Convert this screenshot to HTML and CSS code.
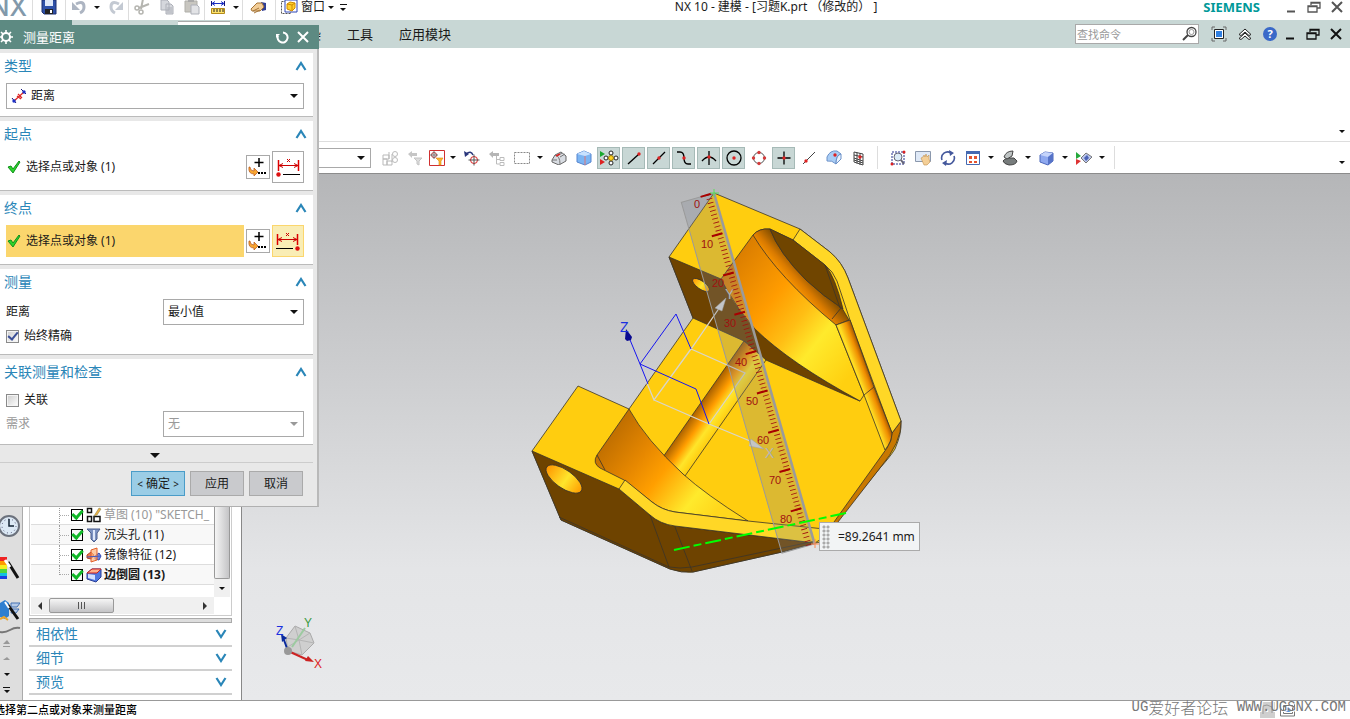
FILE: index.html
```html
<!doctype html>
<html lang="zh-CN">
<head>
    <meta charset="utf-8">
    <title>NX 10 - 建模</title>
    <link rel="stylesheet" href="styles.css">
</head>
<body>
<svg class="defs" aria-hidden="true">
    <symbol id="up" viewBox="0 0 12 10"><path d="M1.500 9L6 2l4.500 7" fill="none" stroke="#2a86b8" stroke-width="2.200"/></symbol>
    <symbol id="down" viewBox="0 0 12 10"><path d="M1.500 1L6 8l4.500-7" fill="none" stroke="#2a86b8" stroke-width="2.200"/></symbol>
    <symbol id="tick" viewBox="0 0 14 14"><path d="M1 7l3-1 2 3 6-8 1 1-7 11z" fill="#2bd52b" stroke="#12901c"/></symbol>
    <symbol id="point" viewBox="0 0 20 20"><path d="M11 1v9M6.500 5.500h9" stroke="#000" stroke-width="1.500"/><path d="M2 10q0 4 4 4v-3l4 4-4 4v-2q-6 0-5-7z" fill="#f7a531" stroke="#b4541a" stroke-width=".7"/><path d="M10 16h2m1 0h2m1 0h2" stroke="#000" stroke-width="2"/></symbol>
    <symbol id="restore" viewBox="0 0 14 12"><path d="M4 4V1.500h9V7h-3M1 5h9v6H1zM4 2h9M1 5.500h9" fill="none" stroke="currentColor" stroke-width="1.300"/></symbol>
    <symbol id="close" viewBox="0 0 12 12"><path d="M1 1l10 10m0-10L1 11" stroke="currentColor" stroke-width="2"/></symbol>
    <symbol id="min" viewBox="0 0 12 12"><path d="M2 10.500h8" stroke="currentColor" stroke-width="2"/></symbol>
</svg>

<header class="titlebar">
    <div class="logo">NX</div>
    <i class="sep"></i>
    <button class="tool wide" aria-label="保存"><svg width="16" height="16"><path d="M1 1h14v14H3l-2-2z" fill="#2e50a8" stroke="#1c2f70"/><path d="M4 1h8v6H4z" fill="#dfe8f8"/><path d="M4 10h8v5H4z" fill="#222"/><path d="M9 11h2v3H9z" fill="#fff"/></svg></button>
    <i class="sep"></i>
    <button class="tool" aria-label="撤消"><svg width="16" height="16"><path d="M5 5q8-4 8 3 0 4-4 6" fill="none" stroke="#adb5c2" stroke-width="3"/><path d="M1 3v8h8z" fill="#adb5c2"/></svg></button>
    <button class="caret" aria-label="撤消列表"></button>
    <button class="tool" aria-label="重做"><svg width="16" height="16"><path d="M11 5Q3 1 3 8q0 4 4 6" fill="none" stroke="#c3c9d2" stroke-width="3"/><path d="M15 3v8H7z" fill="#c3c9d2"/></svg></button>
    <i class="sep"></i>
    <button class="tool" aria-label="剪切"><svg width="16" height="16"><path d="M9 0L7 10M15 5L5 9" stroke="#b5b5b0" stroke-width="2"/><circle cx="3" cy="9" r="2" fill="none" stroke="#b5b5b0" stroke-width="1.500"/><circle cx="7" cy="13" r="2" fill="none" stroke="#b5b5b0" stroke-width="1.500"/></svg></button>
    <button class="tool" aria-label="复制"><svg width="16" height="16"><path d="M2 1h6l2 2v8H2zM7 5h5l2 2v8H7z" fill="#d5d7dc" stroke="#adb0b8"/><path d="M8 9h5m-5 2h5m-5 2h5" stroke="#adb0b8"/></svg></button>
    <button class="tool" aria-label="粘贴"><svg width="16" height="16"><path d="M1 2h12v11H1z" fill="#c8c6c0" stroke="#b0afa9"/><path d="M4 0h6v3H4z" fill="#aaa"/><path d="M7 6h6l2 2v7H7z" fill="#e2e3e6" stroke="#adb0b8"/></svg></button>
    <i class="sep"></i>
    <button class="tool" aria-label="测量"><svg width="16" height="16"><path d="M1.500 2v5m13-5v5" stroke="#15157d"/><path d="M2 4.500h12M5 2.500l-3 2 3 2m6-4l3 2-3 2" stroke="#1b2fc4" fill="none"/><path d="M1.500 9.500h13v5h-13z" fill="#ffe36b" stroke="#b38b1a"/><path d="M4 10v3m3-3v3m3-3v3m3-3v3" stroke="#222"/></svg></button>
    <button class="caret" aria-label="测量列表"></button>
    <i class="sep"></i>
    <button class="tool wide" aria-label="刷"><svg width="18" height="16"><path d="M11 3l5 1v7l-4 1z" fill="#303e94"/><path d="M1 10l6-6 5 0 2 4-4 4H2z" fill="#f2cd97" stroke="#a57437"/><path d="M3 12l6-3m-5 5l6-3" stroke="#a57437"/></svg></button>
    <i class="sep"></i>
    <button class="tool" aria-label="窗口"><svg width="18" height="16"><path d="M1.500 2.500h9v12h-9z" fill="none" stroke="#555" stroke-dasharray="2 1"/><path d="M5 1h12v12H5z" fill="#fff" stroke="#2f46b5"/><path d="M7 5l3-2 5 1v5l-3 3-5-2z" fill="#ffd02b" stroke="#d08a00"/><path d="M7 5l5 1v5m0-5l3-2" stroke="#d08a00" fill="none"/></svg></button>
    <span class="window-text">窗口</span>
    <button class="caret" aria-label="窗口列表"></button>
    <button class="caret more" aria-label="更多"></button>
    <h1>NX 10 - 建模 - [习题K.prt （修改的）&nbsp;]</h1>
    <strong class="siemens">SIEMENS</strong>
    <div class="win-buttons">
        <button aria-label="最小化"><svg width="12" height="12"><use href="#min"/></svg></button>
        <button aria-label="还原"><svg width="14" height="12"><use href="#restore"/></svg></button>
        <button aria-label="关闭"><svg width="12" height="12"><use href="#close"/></svg></button>
    </div>
</header>

<nav class="menubar">
    <i class="tab-file"></i>
    <i class="tab-current"></i>
    <a href="#" class="cut">渲染</a>
    <a href="#">工具</a>
    <a href="#">应用模块</a>
    <label class="search">
        <input type="text" placeholder="查找命令" aria-label="查找命令">
        <svg width="16" height="16"><circle cx="9.500" cy="6" r="4.500" fill="#fff" stroke="#444" stroke-width="1.300"/><circle cx="9.500" cy="6" r="2.500" fill="none" stroke="#999"/><path d="M6 9l-5 5" stroke="#444" stroke-width="2"/></svg>
    </label>
    <div class="menu-icons">
        <button aria-label="全屏"><svg width="16" height="16"><path d="M1 4V1h3m8 0h3v3m0 8v3h-3m-8 0H1v-3" fill="none" stroke="#666"/><path d="M3.500 3.500h9v9h-9z" fill="#fff" stroke="#222"/><path d="M5 5h6v6H5z" fill="#2f7fe0"/></svg></button>
        <button aria-label="折叠功能区"><svg width="14" height="12"><path d="M1 6.500L7 1l6 5.500-2 1-4-3.500-4 3.500zM1 10.500L7 5l6 5.500-2 1L7 8l-4 3.500z" fill="#fff" stroke="#222"/></svg></button>
        <button aria-label="帮助" class="help">?</button>
    </div>
    <div class="win-buttons dark">
        <button aria-label="最小化文档"><svg width="12" height="12"><use href="#min"/></svg></button>
        <button aria-label="还原文档"><svg width="14" height="12"><use href="#restore"/></svg></button>
        <button aria-label="关闭文档"><svg width="12" height="12"><use href="#close"/></svg></button>
    </div>
</nav>

<div class="ribbon"><button class="caret" aria-label="功能区选项"></button></div>

<div class="toolbar">
    <label class="combo filter"><select aria-label="选择过滤器"><option></option></select></label>
    <button class="tool" aria-label="装配过滤"><svg width="18" height="16"><path d="M2 5h6v4H2zM2 9h4v6H2zM6 11h5v4H6zM8 2v7M11 4v8" fill="none" stroke="#b9b9b9"/><circle cx="14" cy="4" r="2.500" fill="none" stroke="#bbb"/><circle cx="14" cy="10" r="2.500" fill="none" stroke="#bbb"/></svg></button>
    <button class="tool" aria-label="重置过滤"><svg width="16" height="16"><path d="M1 4l4-3v2h5v3H5v2z" fill="#c6c6c6"/><path d="M7 8h8l-3 3v4l-2-1v-3z" fill="#ddd" stroke="#c4c4c4"/></svg></button>
    <button class="tool narrow" aria-label="过滤"><svg width="16" height="16"><path d="M.500.500h15v15H.500z" fill="#fff" stroke="#d03030"/><circle cx="5" cy="5" r="2.500" fill="none" stroke="#a33"/><path d="M5 1v8M1 5h8" stroke="#777"/><path d="M7 8h7l-2 3v4h-2v-4z" fill="#ffb52b" stroke="#d98a12" stroke-width=".6"/></svg></button>
    <button class="caret" aria-label="过滤列表"></button>
    <button class="tool" aria-label="取消选择"><svg width="16" height="16"><path d="M2 4q5-4 7 1" fill="none" stroke="#29367b" stroke-width="1.500"/><path d="M0 1l1 6 4-3z" fill="#29367b"/><circle cx="10" cy="10" r="3.500" fill="none" stroke="#d22"/><path d="M10 4.500v11M4.500 10h11" stroke="#555"/></svg></button>
    <button class="tool" aria-label="查找组件"><svg width="18" height="16"><path d="M1 4l4-3v2h6v3H5v2z" fill="#b5b5b5"/><path d="M8.500 6v8h3M9 9.500h3m0-2h4v3h-4zm0 5h4v3h-4z" fill="none" stroke="#bcbcbc"/></svg></button>
    <button class="tool" aria-label="矩形选择"><svg width="16" height="14"><path d="M.500 1.500h15v11H.500z" fill="none" stroke="#888" stroke-dasharray="2 1"/></svg></button>
    <button class="caret" aria-label="选择列表"></button>
    <button class="tool" aria-label="高亮"><svg width="16" height="14"><path d="M1 9l3-5 6-3 5 4v5l-7 4-7-3z" fill="#d8dce2" stroke="#666"/><path d="M4 4q5 1 5 9m0-7l5-3M1 9l5 0M6 5l5-3" fill="none" stroke="#777"/><path d="M5 5l4-2" stroke="#d22" stroke-width="1.500"/></svg></button>
    <button class="tool" aria-label="实体"><svg width="16" height="16"><path d="M1 4l7-3 7 3v8l-6 3-8-3z" fill="#7cb5f3" stroke="#5685cf"/><path d="M1 4l8 2 6-2-7-3z" fill="#c8e2ff"/><path d="M9 6v9" stroke="#d77"/></svg></button>
    <button class="tool on" aria-label="启用捕捉点"><svg width="20" height="16"><path d="M1 1l5 3-5 3z" fill="#18a82e"/><path d="M1 9l5 3-5 3z" fill="#d22"/><g fill="#fff" stroke="#222"><circle cx="12" cy="3" r="2"/><circle cx="12" cy="13" r="2"/><circle cx="7" cy="8" r="2"/><circle cx="17" cy="8" r="2"/></g><circle cx="12" cy="8" r="2.500" fill="#ffd320" stroke="#96760a"/></svg></button>
    <button class="tool on" aria-label="端点"><svg width="16" height="16"><path d="M2 14L13 4" stroke="#000" stroke-width="1.300"/><circle cx="13" cy="4" r="1.700" fill="#d22"/></svg></button>
    <button class="tool on" aria-label="中点"><svg width="16" height="16"><path d="M2 14L14 2" stroke="#000" stroke-width="1.300"/><circle cx="8" cy="8" r="1.700" fill="#d22"/></svg></button>
    <button class="tool on" aria-label="控制点"><svg width="16" height="16"><path d="M1 2h3q4 0 4 6t4 6h3" fill="none" stroke="#000" stroke-width="1.300"/><circle cx="8" cy="8" r="1.700" fill="#d22"/></svg></button>
    <button class="tool on" aria-label="交点"><svg width="16" height="16"><path d="M1 11q7-8 14 0M8 1v14" fill="none" stroke="#000" stroke-width="1.300"/><circle cx="8" cy="7" r="1.700" fill="#d22"/></svg></button>
    <button class="tool on" aria-label="圆心"><svg width="16" height="16"><circle cx="8" cy="8" r="7" fill="none" stroke="#000" stroke-width="1.300"/><circle cx="8" cy="8" r="1.700" fill="#d22"/></svg></button>
    <button class="tool" aria-label="象限点"><svg width="16" height="16"><circle cx="8" cy="8" r="5.500" fill="none" stroke="#555"/><g fill="#d43b3b"><circle cx="8" cy="2.500" r="1.700"/><circle cx="8" cy="13.500" r="1.700"/><circle cx="2.500" cy="8" r="1.700"/><circle cx="13.500" cy="8" r="1.700"/></g></svg></button>
    <button class="tool on" aria-label="现有点"><svg width="16" height="16"><path d="M8 1.500v13M1.500 8h13" stroke="#000" stroke-width="1.300"/><circle cx="8" cy="8" r="1.700" fill="#d22"/></svg></button>
    <button class="tool" aria-label="曲线上的点"><svg width="16" height="16"><path d="M2 14L14 2" stroke="#444"/><circle cx="5" cy="11" r="1.700" fill="#d22"/></svg></button>
    <button class="tool" aria-label="面上的点"><svg width="16" height="16"><path d="M1 7q3-7 10-6l4 3q-5 1-5 10-4-4-9-3z" fill="#a9cdf5" stroke="#6b91c9"/><path d="M10 14q0-9 5-10v5z" fill="#e8f2fd" stroke="#6b91c9"/><circle cx="9" cy="5" r="1.700" fill="#d22"/></svg></button>
    <button class="tool" aria-label="有界栅格上的点"><svg width="16" height="16"><path d="M3 2l9 2v11l-9-3zM6 2.500v11M9 3v12M3 5l9 2M3 8l9 3M3 10l9 3" fill="none" stroke="#444"/><circle cx="9" cy="7" r="1.700" fill="#d22"/></svg></button>
    <i class="sep"></i>
    <button class="tool" aria-label="适合窗口"><svg width="16" height="16"><path d="M2 2h12v12H2z" fill="none" stroke="#24318f" stroke-dasharray="2 1"/><circle cx="8" cy="7" r="4" fill="#dcebf7" stroke="#667"/><path d="M11 10l3 4" stroke="#667" stroke-width="2"/><circle cx="14" cy="2" r="1.500" fill="#d22"/><circle cx="2" cy="14" r="1.500" fill="#d22"/></svg></button>
    <button class="tool" aria-label="平移"><svg width="16" height="16"><path d="M.500 1.500h15v10H.500z" fill="#dfe9f7" stroke="#8b98ad"/><path d="M6 8l2-1 1-2 1 2 1-3 1 3 2-2v4l1 3-3 3H9z" fill="#f4cf97" stroke="#c2914e" stroke-width=".6"/></svg></button>
    <button class="tool" aria-label="旋转"><svg width="16" height="16"><path d="M2 10A6 6 0 0 1 11 3M14 6a6 6 0 0 1-9 7" fill="none" stroke="#44589c" stroke-width="1.600"/><path d="M9 0l5 3-4 3zM7 10l-5 3 4 3z" fill="#44589c"/></svg></button>
    <button class="tool" aria-label="布局"><svg width="16" height="16"><path d="M1.500 1.500h13v13h-13z" fill="#fff" stroke="#4569b1"/><path d="M1 1h14v3H1z" fill="#4569b1"/><path d="M4 6h3v3H4zm5 0h3v3H9zm-5 5h3v2H4zm5 0h3v2H9z" fill="#e4532f"/></svg></button>
    <button class="caret" aria-label="布局列表"></button>
    <button class="tool" aria-label="渲染样式"><svg width="16" height="16"><path d="M1 11q1-2 5-3l6 0 3 3q-1 4-8 4-5-1-6-4z" fill="#777c7c" stroke="#444"/><path d="M2 7q2-6 9-6l-1 5-5 3z" fill="#bfc4c4" stroke="#444"/></svg></button>
    <button class="caret" aria-label="渲染列表"></button>
    <button class="tool" aria-label="视图方位"><svg width="16" height="16"><path d="M1 5l5-3 8 1v8l-5 4-8-3z" fill="#8ea8ef" stroke="#4d68bb"/><path d="M1 5l5-3 8 1-5 4z" fill="#c5d4fb"/><path d="M9 7v8l5-4V3z" fill="#5673c8"/></svg></button>
    <button class="caret" aria-label="方位列表"></button>
    <button class="tool" aria-label="剪切截面"><svg width="18" height="16"><path d="M1 2l5 4-5 3z" fill="#25a83c"/><path d="M1 9l5 2-5 4z" fill="#d33"/><path d="M6 8l5-5 6 4-6 6z" fill="#bac6ec" stroke="#777"/><path d="M9 8l3-3 2 3-3 3z" fill="#4b62b5"/></svg></button>
    <button class="caret" aria-label="截面列表"></button>
    <i class="sep"></i>
    <button class="caret last" aria-label="工具条选项"></button>
</div>

<main class="workspace">
    <aside class="resource">
        <svg width="22" height="24"><circle cx="9" cy="11" r="10" fill="#dce9f5" stroke="#6b717c" stroke-width="2"/><circle cx="9" cy="11" r="7" fill="none" stroke="#557" stroke-dasharray="1 3"/><path d="M9 4v7h5" fill="none" stroke="#123" stroke-width="1.500"/></svg>
        <svg width="22" height="24"><path d="M0 0h7v4H0z" fill="#e22"/><path d="M0 4h7v4H0z" fill="#ff9a00"/><path d="M0 8h7v4H0z" fill="#f5ee20"/><path d="M0 12h7v4H0z" fill="#4fd63b"/><path d="M0 16h7v3H0z" fill="#12bfe0"/><path d="M0 19h7v3H0z" fill="#1b3fe0"/><path d="M8 5l10 16" stroke="#111" stroke-width="3"/><path d="M5 3l5 7" stroke="#fff" stroke-width="3"/></svg>
        <svg width="22" height="24"><path d="M0 4l5-3 4 3v13l-4 3-5-2z" fill="#2f7fd0"/><path d="M11 4h9l-3 4h-6zM12 10h7l-3 4h-5z" fill="#b6cbe8" stroke="#4673b3"/><path d="M8 6l10 14" stroke="#111" stroke-width="3"/><path d="M0 20l4-2 4 3" stroke="#eea52a" stroke-width="2" fill="none"/><path d="M5 3l4 6" stroke="#fff" stroke-width="2"/></svg>
        <svg width="22" height="13"><path d="M0 9q5 1 10-2t10-2" fill="none" stroke="#777" stroke-width="2"/></svg>
        <svg width="22" height="15"><path d="M3 8l4-4 3 4zM3 10h7v1H3z" fill="#999"/></svg>
        <svg width="22" height="15"><path d="M3 9l4-3 3 3z" fill="#999"/></svg>
        <svg width="22" height="15"><path d="M4 7h6L7 10z" fill="#111"/></svg>
        <svg width="22" height="15"><path d="M3 6h7v1H3zM4 9h6l-3 3z" fill="#111"/></svg>
    </aside>
    <aside class="navigator">
        <div class="tree">
            <div class="tree-body">
                <ul>
                    <li class="muted"><label><input type="checkbox" checked><svg width="16" height="16"><path d="M1.500 1.500h4v4h-4zM1.500 9.500h4v5h-4zM8 9.500h6v5H8z" fill="none" stroke="#111" stroke-width="1.500"/><path d="M8 9l5-8 2 1-4 6z" fill="#f0b040" stroke="#885" stroke-width=".6"/></svg>草图 (10) "SKETCH_</label></li>
                    <li><label><input type="checkbox" checked><svg width="16" height="16"><path d="M1 2h13l-3 4v6l-3 3-3-3V6z" fill="#7d93c2" stroke="#4a5d8c"/><path d="M7 3h2v10H7z" fill="#dfe8fa"/></svg>沉头孔 (11)</label></li>
                    <li><label><input type="checkbox" checked><svg width="16" height="16"><path d="M1 8l4-3 3 3-3 4-4-1z" fill="#f07b52" stroke="#b54122"/><path d="M9 9l4-3 2 3-2 4-4-1z" fill="#6f8be5" stroke="#3449ae"/><path d="M5 3l6-2v12l-6 2z" fill="#ffb27a" fill-opacity=".7" stroke="#e05f2b"/><path d="M1 10l14-1" stroke="#4155c0"/></svg>镜像特征 (12)</label></li>
                    <li class="bold"><label><input type="checkbox" checked><svg width="16" height="16"><path d="M1 6l5-4 9 0v8l-5 5-9-3z" fill="#4f77df" stroke="#293e96"/><path d="M1 6l5-4 9 0-4 4z" fill="#ffb08a" stroke="#c22"/><path d="M2 7l7 1v5l-7-2z" fill="#d3e1ff"/></svg>边倒圆 (13)</label></li>
                </ul>
                <div class="vscroll"><i class="thumb"></i><button class="caret" aria-label="向下滚动"></button></div>
            </div>
            <div class="hscroll">
                <button aria-label="向左滚动"><svg width="8" height="8"><path d="M6 0v8L2 4z" fill="#333"/></svg></button>
                <i class="thumb"><b></b><b></b><b></b></i>
                <button aria-label="向右滚动"><svg width="8" height="8"><path d="M2 0v8l4-4z" fill="#333"/></svg></button>
            </div>
        </div>
        <div class="splitter"></div>
        <a href="#" class="fold">相依性<svg width="12" height="10"><use href="#down"/></svg></a>
        <a href="#" class="fold">细节<svg width="12" height="10"><use href="#down"/></svg></a>
        <a href="#" class="fold">预览<svg width="12" height="10"><use href="#down"/></svg></a>
    </aside>
    <section class="viewport">
        <svg class="scene" role="img" aria-label="零件模型">
            <defs>
                <linearGradient id="wall" gradientUnits="userSpaceOnUse" x1="728" y1="262" x2="858" y2="365">
                    <stop offset="0" stop-color="#d97c00"/><stop offset=".35" stop-color="#ff9c00"/><stop offset=".55" stop-color="#ffbe14"/><stop offset=".72" stop-color="#ffea2c"/><stop offset="1" stop-color="#ffd010"/>
                </linearGradient>
                <linearGradient id="fillet" gradientUnits="userSpaceOnUse" x1="782" y1="277" x2="801" y2="260">
                    <stop offset="0" stop-color="#ff9900"/><stop offset=".4" stop-color="#d97a00"/><stop offset="1" stop-color="#704500"/>
                </linearGradient>
                <linearGradient id="side" gradientUnits="userSpaceOnUse" x1="847" y1="364" x2="863" y2="358">
                    <stop offset="0" stop-color="#ffc40c"/><stop offset=".35" stop-color="#ffdf24"/><stop offset=".8" stop-color="#ef8d00"/><stop offset="1" stop-color="#b56300"/>
                </linearGradient>
                <linearGradient id="pocket" gradientUnits="userSpaceOnUse" x1="606" y1="438" x2="710" y2="520">
                    <stop offset="0" stop-color="#bf6e00"/><stop offset=".3" stop-color="#e78800"/><stop offset=".5" stop-color="#ff9f00"/><stop offset=".8" stop-color="#ffea2c"/><stop offset="1" stop-color="#ffd71c"/>
                </linearGradient>
                <linearGradient id="groove" gradientUnits="userSpaceOnUse" x1="703" y1="399" x2="727" y2="416">
                    <stop offset="0" stop-color="#a65e00"/><stop offset=".4" stop-color="#ff9c00"/><stop offset=".7" stop-color="#ffe52a"/><stop offset="1" stop-color="#ffce10"/>
                </linearGradient>
                <linearGradient id="hole"><stop offset="0" stop-color="#ff9500"/><stop offset=".55" stop-color="#ffe52c"/><stop offset="1" stop-color="#ff9d00"/></linearGradient>
            </defs>
            <g transform="translate(-242 -174)">
                <!-- 实体 -->
                <g stroke="#3a332a" stroke-width=".8" stroke-linejoin="round">
                    <path fill="#ffcd0f" d="M714 193L800 229L830 252Q842 262 848 278L901 421Q902 433 895 449Q890 457 880 468L820 542L782 552L693 572Q681 573 670 569L561 520L532 451L578 386L629 409L693 318L669 257Z"/>
                    <path fill="#c87800" d="M901 421L892 433Q892 441 887 448L834 522L820 542L838 522L880 468Q902 442 901 421Z"/>
                    <path fill="#ffd726" d="M793 240L800 229L830 252Q842 262 848 278L901 421L892 433L887 420L850 320L837 281Q833 271 825 265Z"/>
                    <path fill="#6e4300" d="M669 257L721 279L727 290Q738 310 755 329Q790 363 860 401Q852 398 766 360L744 341L693 318Z"/>
                    <path fill="url(#wall)" d="M721 279L753 235Q759 228 770 229L793 240L840 312L836 325L864 395L860 401Q790 363 755 329Q738 310 727 290Z"/>
                    <path fill="url(#fillet)" d="M753 235Q759 228 770 229Q779 253 806 280Q823 296 842 308L849 320L836 325Q778 277 753 235Z"/>
                    <path fill="#704500" d="M770 229L793 240L825 265Q835 276 843 309Q823 296 806 280Q779 253 770 229Z"/>
                    <path fill="none" d="M825 265L840 308M832 319L841 308"/>
                    <path fill="url(#side)" d="M836 325L850 320L874 387L892 433Q892 441 885 450L864 395Z"/>
                    <path fill="none" d="M864 395L874 387"/>
                    <path fill="url(#groove)" d="M744 341L663 457L685 476L766 360Z"/>
                    <path fill="url(#pocket)" d="M629 409L597 455Q592 463 600 468L624 480L652 502Q662 510 675 512L748 521Q705 494 683 474Q646 440 629 409Z"/>
                    <path fill="none" d="M597 455L605 470"/>
                    <path fill="#6e4300" d="M532 451L619 489L650 515Q660 524 675 526L815 543L782 552L693 572Q681 573 670 569L561 520Z"/>
                    <path fill="#ffd726" d="M619 489L625 480L652 502Q662 510 675 512L748 521L834 530L815 543L675 526Q660 524 650 515Z"/>
                    <path fill="none" d="M650 515L669 567M675 527L692 571M559 517L669 567Q680 569 692 567L815 541"/>
                    <ellipse cx="564" cy="479" rx="21" ry="9" transform="rotate(35 564 479)" fill="url(#hole)"/>
                    <ellipse cx="701" cy="285" rx="10" ry="4" transform="rotate(35 701 285)" fill="url(#hole)"/>
                </g>
                <!-- 坐标系 -->
                <g fill="none" stroke="#d8d5cc" stroke-width="1.300">
                    <path d="M644 376L654 400L691 349L720 307M654 400L709 424L755 443M691 349L745 373L709 424"/>
                </g>
                <path d="M726 298L715 308L722 311ZM764 449L751 439L749 446Z" fill="#ddd" stroke="#aaa" stroke-width=".5"/>
                <path d="M628 335L640 364L676 314L691 349M640 364L696 389L709 424M640 364L648 384" fill="none" stroke="#1616f0"/>
                <path d="M626 329L632 337L631 340L627 341L625 339Z" fill="#0a0a90"/>
                <text x="620" y="332" class="axis blue">Z</text>
                <text x="725" y="299" class="axis grey">Y</text>
                <text x="765" y="458" class="axis grey">X</text>
                <!-- 标尺 -->
                <g transform="translate(714 193) rotate(-16)">
                    <path d="M-34 0H0V365H-34Z" fill="#7d8590" fill-opacity=".27" stroke="#9a9a9a"/>
                    <path d="M0 0V365" stroke="#9b9b9b" stroke-width="2.500"/>
                    <path d="M-6 0V365" pathLength="89.260" stroke="#a01010" stroke-width="6" stroke-dasharray=".2 .8"/>
                    <path d="M-8.500-1V365" pathLength="89.500" stroke="#a80000" stroke-width="11" stroke-dasharray=".5 9.500"/>
                </g>
                <g class="scale">
                    <text x="697" y="208">0</text><text x="707" y="248">10</text><text x="718" y="287">20</text>
                    <text x="730" y="327">30</text><text x="741" y="366">40</text><text x="752" y="405">50</text>
                    <text x="763" y="444">60</text><text x="775" y="484">70</text><text x="786" y="523">80</text>
                </g>
                <path d="M674 550L846 513" stroke="#0f0" stroke-width="2" stroke-dasharray="16 4 8 4"/>
                <path d="M710 193h9M714 189v8" stroke="#5ae05a"/>
                <path d="M811 544h9M815 539v9" stroke="#ff8a50"/>
                <!-- 视图三重轴 -->
                <path d="M295 626L310 633L314 643L302 655L288 651L286 638Z" fill="#cfcfcf" stroke="#aaa"/>
                <path d="M295 626L299 640L314 643M299 640L286 648M299 640L302 655M286 638L299 640L310 633" fill="none" stroke="#b5b5b5"/>
                <path d="M292 647L305 628" stroke="#9ccaa0" stroke-width="2"/>
                <path d="M288 651L284 640" stroke="#0a2a9c" stroke-width="2"/><path d="M281 634L287 638L282 642Z" fill="#0a2a9c"/>
                <path d="M288 651L308 660" stroke="#c22" stroke-width="2"/><path d="M314 662L305 661L308 656Z" fill="#c22"/>
                <circle cx="288" cy="651" r="4" fill="#999"/>
                <text x="276" y="635" class="triad blue">Z</text>
                <text x="304" y="627" class="triad green">Y</text>
                <text x="314" y="668" class="triad red">X</text>
            </g>
        </svg>
        <output class="measure"><i></i>=89.2641 mm</output>
    </section>
</main>

<footer class="status">
    <span>选择第二点或对象来测量距离</span>
    <svg width="36" height="16"><path d="M0 0h15v16H0z" fill="#cfcfcf"/><path d="M3 12V4l4-1 5 2v6" fill="none" stroke="#999"/><path d="M20.500 1v13h14V1M23.500 3.500h9v8h-9z" fill="#fff" stroke="#777"/><path d="M25 8l3-3 3 3v2h-6z" fill="#5c97dd"/></svg>
</footer>
<div class="watermark"><b>UG</b>爱好者论坛<b> WWW.UGSNX.COM</b></div>

<form class="dialog">
    <header>
        <svg width="14" height="14"><circle cx="6" cy="7" r="4" fill="none" stroke="#fff" stroke-width="2"/><path d="M6 0v3m0 8v3M-1 7h3m8 0h3M1 2l2 2m6 6l2 2M11 2l-2 2M3 10l-2 2" stroke="#fff" stroke-width="1.600"/></svg>
        <h2>测量距离</h2>
        <button type="reset" aria-label="重置"><svg width="14" height="14"><path d="M8 2.500a5 5 0 1 1-5 3" fill="none" stroke="#fff" stroke-width="2"/><path d="M1 8V4h4z" fill="#fff"/></svg></button>
        <button type="button" aria-label="关闭对话框"><svg width="12" height="12"><use href="#close"/></svg></button>
    </header>
    <section class="group">
        <h3>类型<svg width="12" height="10"><use href="#up"/></svg></h3>
        <div class="row">
            <label class="combo">
                <svg width="16" height="16"><path d="M1 10l4 5M10 1l5 5" stroke="#15157d"/><path d="M3 13L13 4M6 8l4 3M7 6l4 4" stroke="#d22" stroke-width="1.200"/><circle cx="3" cy="13" r="1.700" fill="#1b2fc4"/><circle cx="13" cy="4" r="1.700" fill="#1b2fc4"/></svg>
                <select aria-label="类型"><option>距离</option></select>
            </label>
        </div>
    </section>
    <section class="group">
        <h3>起点<svg width="12" height="10"><use href="#up"/></svg></h3>
        <div class="row pick">
            <span><svg width="14" height="14"><use href="#tick"/></svg>选择点或对象 (1)</span>
            <button type="button" class="small" aria-label="起点构造器"><svg width="20" height="20"><use href="#point"/></svg></button>
            <button type="button" class="big" aria-label="起点"><svg width="26" height="22"><path d="M3.500 4v11m20-11v11" stroke="#d00" stroke-width="1.500"/><path d="M4 9.500h19M8 7.500l-4 2 4 2m11-4l4 2-4 2M12 3l3 3m0-3l-3 3" fill="none" stroke="#c00"/><circle cx="3.500" cy="18.500" r="2.200" fill="#d11"/><path d="M8 18.500h17" stroke="#000"/></svg></button>
        </div>
    </section>
    <section class="group">
        <h3>终点<svg width="12" height="10"><use href="#up"/></svg></h3>
        <div class="row pick active">
            <span><svg width="14" height="14"><use href="#tick"/></svg>选择点或对象 (1)</span>
            <button type="button" class="small" aria-label="终点构造器"><svg width="20" height="20"><use href="#point"/></svg></button>
            <button type="button" class="big" aria-label="终点"><svg width="26" height="22"><path d="M2.500 4v11m20-11v11" stroke="#d00" stroke-width="1.500"/><path d="M3 9.500h19M7 7.500l-4 2 4 2m11-4l4 2-4 2M11 3l3 3m0-3l-3 3" fill="none" stroke="#c00"/><circle cx="22.500" cy="18.500" r="2.200" fill="#d11"/><path d="M1 18.500h17" stroke="#000"/></svg></button>
        </div>
    </section>
    <section class="group">
        <h3>测量<svg width="12" height="10"><use href="#up"/></svg></h3>
        <div class="row split">
            <label for="distance">距离</label>
            <span class="combo"><select id="distance"><option>最小值</option></select></span>
        </div>
        <div class="row check"><label><input type="checkbox" checked>始终精确</label></div>
    </section>
    <section class="group">
        <h3>关联测量和检查<svg width="12" height="10"><use href="#up"/></svg></h3>
        <div class="row check"><label><input type="checkbox">关联</label></div>
        <div class="row split off">
            <label for="need">需求</label>
            <span class="combo"><select id="need" disabled><option>无</option></select></span>
        </div>
    </section>
    <button type="button" class="expand" aria-label="更多选项"></button>
    <div class="actions">
        <button type="button" class="ok"><small>&lt;</small> 确定 <small>&gt;</small></button>
        <button type="button">应用</button>
        <button type="button">取消</button>
    </div>
</form>
</body>
</html>
```

FILE: styles.css
```css
*{box-sizing:border-box;}
body{margin:0; height:100vh; display:flex; flex-direction:column; overflow:hidden; position:relative; background:#fff; color:#1a1a1a; font:12px/16px "Noto Sans","Noto Sans CJK SC",sans-serif;}
button{font:inherit; color:inherit; border:0; padding:0; margin:0; background:none;}
h1,h2,h3,ul{margin:0; padding:0; font-weight:normal;}
a{color:inherit; text-decoration:none;}
svg{display:block; flex:none;}
.defs{width:0; height:0; position:absolute;}

/* 图标按钮 */
.tool{width:25px; height:22px; display:flex; align-items:center; justify-content:center; flex:none;}
.tool.wide{width:32px;}
.tool.narrow{width:20px;}
.tool.on{width:23px; margin:0 1px; background:#c8d7d5; border:1px solid #a6bab7;}
.caret{width:12px; height:16px; flex:none; display:flex; flex-direction:column; align-items:center; justify-content:center;}
.caret:after,.expand:after,.combo:after{content:""; border:3px solid transparent; border-top-color:#111; border-bottom:0;}
.caret.more:before{content:""; width:7px; height:1px; margin-bottom:3px; background:#111;}
.sep{width:1px; height:28px; flex:none; background:#ddd;}

.titlebar{height:20px; padding-bottom:6px; flex:none; display:flex; align-items:center;}
.titlebar .tool{height:16px;}
.logo{width:32px; padding-right:5px; display:flex; justify-content:flex-end; flex:none; font:500 25px/20px Inter,sans-serif; color:#8299ab;}
.window-text{width:24px; flex:none;}
.titlebar h1{flex:1; text-align:center; font-size:12px; white-space:nowrap;}
.siemens{color:#099; font:bold 13px/14px "Noto Sans",sans-serif; margin-right:25px;}
.win-buttons{display:flex; gap:10px; align-items:center; padding-right:7px; color:#555;}
.win-buttons.dark{color:#111; padding-right:8px;}

.menubar{height:28px; flex:none; display:flex; align-items:center; background:#c8d7d5; font-size:13px;}
.tab-file{width:72px; height:28px; background:#5d8a82;}
.tab-current{width:52px; height:27px; margin:1px 0 0 106px; background:#fff; border-top:1px solid #aaa;}
.menubar a{margin-right:26px;}
.menubar a.cut{margin-left:65px;}
.search{width:124px; height:20px; margin-left:auto; display:flex; align-items:center; border:1px solid #a9a9a9; background:#fff;}
.search input{flex:1; min-width:0; border:0; padding:0 1px; background:none; font:11px/16px "Noto Sans CJK SC",sans-serif; outline:0;}
.search input::placeholder{color:#999;}
.menu-icons{display:flex; align-items:center; gap:11px; padding:0 7px 0 12px;}
.help{width:14px; height:14px; border-radius:7px; background:#3a69c8; color:#fff; font:bold 11px/14px "Noto Sans",sans-serif;}

.ribbon{height:93px; flex:none; display:flex; align-items:flex-end; justify-content:flex-end; padding:0 2px 2px 0;}
.toolbar{height:33px; flex:none; display:flex; align-items:center; border-top:1px solid #ddd; border-bottom:1px solid #8c8c8c;}
.toolbar .sep{margin:0 7px 0 6px; height:23px;}
.toolbar .last{margin:10px 2px 0 auto;}
.combo{height:26px; display:flex; align-items:center; flex:1; border:1px solid #a9a9a9; background:#fff;}
.combo svg{margin-left:4px;}
.combo select{flex:1; min-width:0; height:24px; padding:0 16px 0 4px; border:0; outline:0; appearance:none; background:none; font:inherit; color:inherit; opacity:1;}
.combo:after{border-width:4px 4px 0; margin:0 5px 0 -13px; pointer-events:none;}
.combo.filter{flex:none; width:131px; height:20px; margin:0 6px 0 240px;}
.combo.filter select{height:18px;}

.workspace{flex:1; min-height:0; display:flex;}
.resource{width:23px; flex:none; display:flex; flex-direction:column; justify-content:flex-end; padding-bottom:4px; background:#dedede; border-right:1px solid #aaa;}
.resource svg:nth-child(-n+2){margin-bottom:18px;}
.navigator{width:219px; flex:none; display:flex; flex-direction:column; justify-content:flex-end; padding:0 9px 5px 6px; border-right:1px solid #888;}
.tree{border:1px solid #ccc; border-width:0 1px 1px; padding:0 1px 1px;}
.tree-body{display:flex; height:92px;}
.tree ul{flex:1; min-width:0; list-style:none;}
.tree li{height:20px; padding-left:28px; display:flex; overflow:hidden; border-bottom:1px solid #ddd; white-space:nowrap;}
.tree li:nth-child(odd){background:#fff;}
.tree li:nth-child(even){background:#f8f8f8;}
.tree label{display:flex; align-items:center; gap:2px;}
.tree label:before{content:""; width:9px; height:20px; border-left:1px dotted #999; background:linear-gradient(90deg,#aaa 50%,transparent 50%) 0 10px/2px 1px repeat-x;}
.tree .bold label:before{height:10px; margin-bottom:10px; background-position:0 9px;}
.tree input{appearance:none; width:12px; height:12px; margin:0 1px 0 0; border:1px solid #000; outline:0; display:grid; place-items:center;}
.tree input:checked:before{content:""; width:4px; height:8px; margin-top:-2px; border:solid #12b82a; border-width:0 3px 3px 0; transform:rotate(42deg);}
.muted{color:#999;}
.bold{font-weight:bold;}
.vscroll{width:16px; display:flex; flex-direction:column; background:#f0f0f0;}
.vscroll .thumb{flex:1; border:1px solid #999; border-top:0; border-radius:0 0 2px 2px; background:linear-gradient(90deg,#f5f5f5,#c4c4c6);}
.vscroll .caret{width:16px; height:18px;}
.hscroll{width:183px; height:17px; display:flex; align-items:center; background:#f0f0f0;}
.hscroll button{width:18px; height:16px; display:flex; align-items:center; justify-content:center;}
.hscroll .thumb{width:65px; height:15px; display:flex; align-items:center; justify-content:center; gap:2px; border:1px solid #999; border-radius:2px; background:linear-gradient(#f5f5f5,#c4c4c6);}
.hscroll b{width:1px; height:7px; background:#555;}
.hscroll button:last-child{margin-left:auto;}
.splitter{height:5px; margin-top:2px; background:#ddd; border:1px solid #aaa;}
.fold{height:24px; padding:0 5px 0 7px; display:flex; align-items:center; justify-content:space-between; border-bottom:2px solid #d0d0d0; color:#2a86b8; font-size:14px;}

.viewport{flex:1; min-width:0; position:relative; background:linear-gradient(#b5b6b8,#e4e5e7 75%,#e8e9eb);}
.scene{width:100%; height:100%;}
.scene text{font-family:"Liberation Sans",sans-serif;}
.scene .axis{font-size:14px;}
.scene .triad{font-size:12px;}
.blue{fill:#1a2fe0;}
.grey{fill:#c4c4c4;}
.green{fill:#3a9a40;}
.red{fill:#d22;}
.scale text{font-size:11px; fill:#a01010; text-anchor:middle;}
.measure{position:absolute; left:577px; top:348px; height:29px; padding:0 4px 0 2px; display:flex; align-items:center; gap:8px; white-space:nowrap; border:1px solid #aaa; background:#f2f4f5;}
.measure i{width:8px; height:24px; background:radial-gradient(circle,#aaa 1px,transparent 2px) 0 0/4px 4px;}

.status{height:19px; flex:none; display:flex; align-items:center; justify-content:space-between; border-top:1px solid #999; padding-right:54px; font-size:11px; font-weight:500; color:#000;}
.status span{margin-left:-6px;}
.watermark{position:absolute; right:4px; bottom:2px; display:flex; align-items:center; color:#777; font:300 16px/20px "Noto Sans CJK SC",sans-serif; text-shadow:1px 1px #fff; white-space:pre;}
.watermark b{font:14px/20px "Liberation Mono",monospace;}

/* 测量距离对话框 */
.dialog{position:absolute; left:0; top:25px; width:319px; background:#e8e8e8; border-right:2px solid #b9b9b9; border-bottom:1px solid #b0b0b0;}
.dialog header{height:24px; margin:0 -2px 4px 0; padding-right:10px; display:flex; align-items:center; gap:8px; background:#5d8a82; color:#fff;}
.dialog h2{flex:1; margin-left:1px; font-size:13px;}
.group{width:313px; margin-bottom:4px; padding:0 9px 7px 6px; background:#fff; border-bottom:1px solid #bbb;}
.group h3{height:26px; margin:0 -3px 4px -2px; display:flex; align-items:center; justify-content:space-between; color:#2a86b8; font-size:14px;}
.row{display:flex; align-items:center;}
.pick{gap:2px;}
.pick span{flex:1; height:32px; display:flex; align-items:center; gap:5px; padding-left:1px;}
.small{width:24px; height:24px; border:1px solid #a9a9a9; display:grid; place-items:center; background:#fff;}
.big{width:32px; height:32px; border:1px solid #a9a9a9; display:grid; place-items:center; background:#fff;}
.active span{background:#fbd66d;}
.active .big{background:#f9edb5; border-color:#fbd66d;}
.split label{width:157px;}
.off{color:#999;}
.off .combo:after{border-top-color:#999;}
.check{height:22px;}
.check label{display:flex; align-items:center; gap:5px;}
.check input{appearance:none; width:13px; height:13px; margin:0; border:1px solid #8a8a8a; outline:0; background:linear-gradient(135deg,#ccc,#fff); box-shadow:inset 0 0 0 1px #f4f4f4; display:grid; place-items:center;}
.check input:checked:before{content:""; width:4px; height:8px; margin-top:-2px; border:solid #3b4f96; border-width:0 2px 2px 0; transform:rotate(40deg);}
.expand{width:313px; height:14px; display:grid; place-items:center; border-bottom:1px solid #ccc;}
.expand:after{border-width:5px 5px 0; margin-right:4px;}
.actions{display:flex; justify-content:flex-end; gap:5px; padding:8px 14px 10px 0;}
.actions button{width:54px; height:25px; border:1px solid #aaa; background:#c9cacd; white-space:nowrap;}
.actions .ok{background:#9bcde6; border-color:#4a9cc8;}
.actions small{font-size:10px;}
```
